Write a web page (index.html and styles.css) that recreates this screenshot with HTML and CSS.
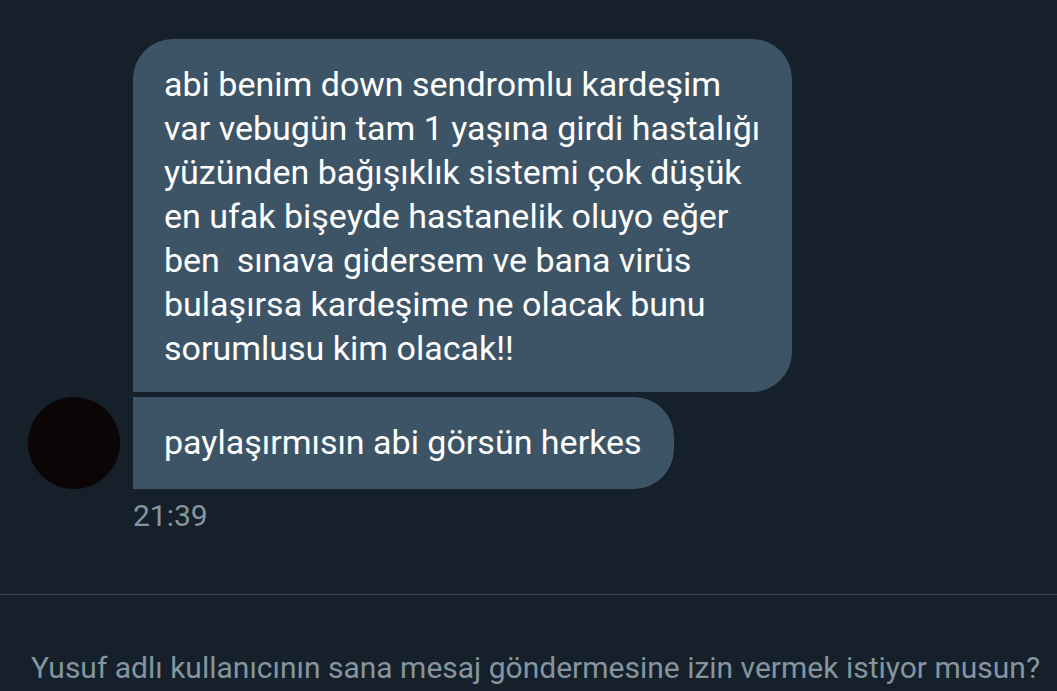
FILE: index.html
```html
<!DOCTYPE html>
<html lang="tr">
<head>
  <meta charset="UTF-8" />
  <title>Mesaj isteği</title>
  <meta name="viewport" content="width=device-width, initial-scale=1.0" />
  <link rel="stylesheet" href="styles.css">
</head>
<body>

  <main class="conversation">
    <div class="message-group">
      <div class="avatar"></div>
      <div class="bubbles">
        <p class="bubble bubble-first">abi benim down sendromlu kardeşim<br>
          var vebugün tam 1 yaşına girdi hastalığı<br>
          yüzünden bağışıklık sistemi çok düşük<br>
          en ufak bişeyde hastanelik oluyo eğer<br>
          ben&nbsp; sınava gidersem ve bana virüs<br>
          bulaşırsa kardeşime ne olacak bunu<br>
          sorumlusu kim olacak!!</p>
        <p class="bubble bubble-last">paylaşırmısın abi görsün herkes</p>
      </div>
    </div>
    <time class="timestamp" datetime="21:39">21:39</time>
  </main>

  <footer class="request">
    <p>Yusuf adlı kullanıcının sana mesaj göndermesine izin vermek istiyor musun?</p>
  </footer>

</body>
</html>
```

FILE: styles.css
```css
:root {
  --background: #16202a;
  --bubble: #3d5466;
  --muted: #8495a0;
  --border: #38444d;
}

* {
  box-sizing: border-box;
}

body {
  margin: 0;
  font-family: Roboto, sans-serif;
  background-color: var(--background);
  color: #fff;
}

p {
  margin: 0;
}

.conversation {
  padding: 39px 28px 59px;
}

.message-group {
  display: flex;
  align-items: flex-end;
  gap: 13px;
}

.avatar {
  flex: none;
  width: 92px;
  height: 92px;
  border-radius: 50%;
  background: #0c0506;
}

.bubbles {
  display: flex;
  flex-direction: column;
  align-items: flex-start;
  gap: 5px;
}

.bubble {
  padding: 23px 32px 22px 31px;
  background: var(--bubble);
  font-size: 34px;
  line-height: 44px;
}

.bubble-first {
  border-radius: 40px 40px 40px 0;
}

.bubble-last {
  padding-bottom: 25px;
  border-radius: 0 40px 40px 0;
}

.timestamp {
  display: block;
  margin: 8px 0 0 105px;
  color: var(--muted);
  font-size: 30px;
  line-height: 38px;
}

.request {
  padding: 54px 14px 4px 28px;
  border-top: 1px solid var(--border);
  color: var(--muted);
  font-size: 30px;
  line-height: 38px;
  text-align: center;
}
```
